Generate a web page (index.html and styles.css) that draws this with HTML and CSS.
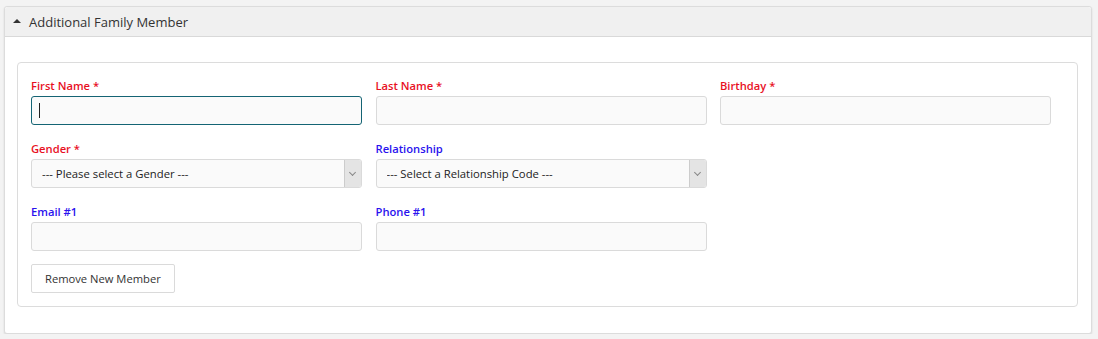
FILE: index.html
```html
<!DOCTYPE html>
<html lang="en">
<head>
    <meta charset="UTF-8">
    <title>Additional Family Member</title>
    <link rel="stylesheet" href="styles.css">
</head>
<body>
    <div class="panel">
        <div class="panel-heading">
            <span class="caret-up"></span>
            <span class="panel-title">Additional Family Member</span>
        </div>
        <div class="panel-body">
            <div class="member-card">
                <div class="form-grid">
                    <div class="field">
                        <label class="req">First Name *</label>
                        <div class="input-wrap">
                            <input type="text" class="input focused">
                            <span class="text-caret"></span>
                        </div>
                    </div>
                    <div class="field">
                        <label class="req">Last Name *</label>
                        <input type="text" class="input">
                    </div>
                    <div class="field">
                        <label class="req">Birthday *</label>
                        <input type="text" class="input">
                    </div>

                    <div class="field">
                        <label class="req">Gender *</label>
                        <div class="select-wrap">
                            <select class="input select">
                                <option>--- Please select a Gender ---</option>
                            </select>
                        </div>
                    </div>
                    <div class="field">
                        <label class="opt">Relationship</label>
                        <div class="select-wrap">
                            <select class="input select">
                                <option>--- Select a Relationship Code ---</option>
                            </select>
                        </div>
                    </div>
                    <div class="field"></div>

                    <div class="field">
                        <label class="opt">Email #1</label>
                        <input type="text" class="input">
                    </div>
                    <div class="field">
                        <label class="opt">Phone #1</label>
                        <input type="text" class="input">
                    </div>
                    <div class="field"></div>
                </div>
                <button class="btn-remove">Remove New Member</button>
            </div>
        </div>
    </div>
</body>
</html>
```

FILE: styles.css
```css
body {
    margin: 0;
    padding: 0;
    background-color: #f3f3f3;
    font-family: 'Open Sans', 'Noto Sans', sans-serif;
    color: #333;
}
.panel {
    margin: 6px 6px 0 4px;
    background-color: #fff;
    border: 1px solid #dcdcdc;
    border-radius: 3px;
    box-shadow: 0 1px 2px rgba(0, 0, 0, 0.12);
}
.panel-heading {
    display: flex;
    align-items: center;
    height: 29px;
    padding-left: 8px;
    background-color: #f0f0f0;
    border-bottom: 1px solid #d9d9d9;
    border-radius: 3px 3px 0 0;
}
.caret-up {
    width: 0;
    height: 0;
    border-left: 4px solid transparent;
    border-right: 4px solid transparent;
    border-bottom: 4px solid #333;
    margin-right: 8px;
    margin-top: -1px;
}
.panel-title {
    font-size: 13px;
    color: #333;
}
.panel-body {
    padding: 25px 13px 26px 12px;
}
.member-card {
    border: 1px solid #dcdcdc;
    border-radius: 4px;
    padding: 16px 13px 13px 13px;
}
.form-grid {
    display: grid;
    grid-template-columns: repeat(3, 331px);
    column-gap: 13.5px;
    row-gap: 17px;
}
.field label {
    display: block;
    font-size: 11.2px;
    font-weight: 600;
    line-height: 13px;
    margin-bottom: 4px;
}
.field label.req {
    color: #e8101f;
}
.field label.opt {
    color: #2a12ee;
}
.input {
    display: block;
    width: 100%;
    height: 29px;
    box-sizing: border-box;
    border: 1px solid #dadada;
    border-radius: 3px;
    background-color: #fafafa;
    font-family: 'Open Sans', 'Noto Sans', sans-serif;
    font-size: 11.3px;
    color: #222;
    padding: 0 10px;
    margin: 0;
    outline: none;
}
.input.focused {
    border-color: #146474;
}
.input-wrap, .select-wrap {
    position: relative;
}
.text-caret {
    position: absolute;
    left: 8px;
    top: 7px;
    width: 1px;
    height: 15px;
    background-color: #222;
}
.select {
    -webkit-appearance: none;
    appearance: none;
    padding-right: 24px;
}
.select-wrap::after {
    content: "";
    position: absolute;
    right: 1px;
    top: 1px;
    bottom: 1px;
    width: 16px;
    background-color: #e4e4e4;
    border-left: 1px solid #cccccc;
    border-radius: 0 2px 2px 0;
}
.select-wrap::before {
    content: "";
    position: absolute;
    right: 7px;
    top: 11px;
    width: 4px;
    height: 4px;
    border-right: 1px solid #888;
    border-bottom: 1px solid #888;
    transform: rotate(45deg);
    z-index: 1;
}
.btn-remove {
    display: block;
    margin-top: 13px;
    height: 29px;
    padding: 0 13px;
    background-color: #fff;
    border: 1px solid #dadada;
    border-radius: 2px;
    font-family: 'Open Sans', 'Noto Sans', sans-serif;
    font-size: 11.2px;
    color: #333;
    cursor: pointer;
}
```
